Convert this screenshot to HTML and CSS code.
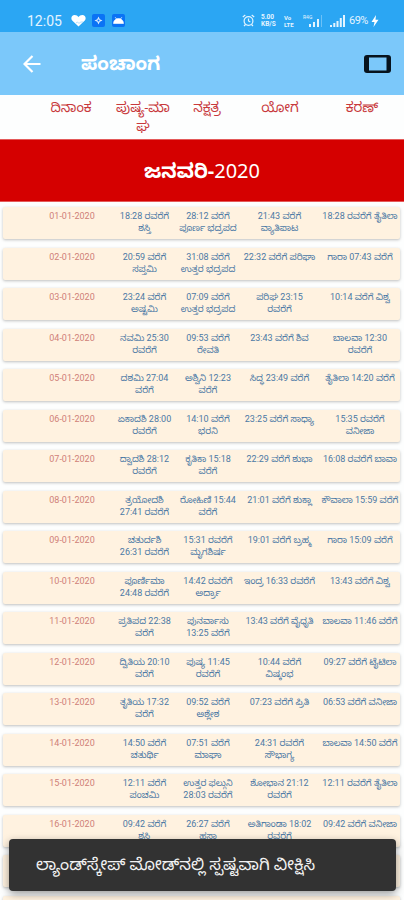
FILE: index.html
```html
<!DOCTYPE html>
<html lang="kn">
<head>
    <meta charset="UTF-8">
    <meta name="viewport" content="width=device-width, initial-scale=1.0">
    <title>ಪಂಚಾಂಗ</title>
    <link rel="stylesheet" href="styles.css">
</head>
<body>
    <div class="status-bar">
        <span class="time">12:05</span>
        <svg class="heart" width="15" height="13" viewBox="0 0 15 13"><path d="M7.5 12.5L1.2 6.6C-.6 4.5.6 1 3.7 1c1.7 0 2.9.8 3.8 2C8.400 1.800 9.600 1 11.300 1c3.100 0 4.300 3.500 2.500 5.600z" fill="#fff"/><path d="M5 9l1.500-1L8 9.500 9.500 8H12" fill="none" stroke="#8fd0fa" stroke-width=".7"/></svg>
        <svg class="app" width="13" height="13" viewBox="0 0 13 13"><rect width="13" height="13" rx="2" fill="#0a73f5"/><path d="M6.500 2.500L7.800 5.200 10.500 6.500 7.800 7.800 6.500 10.500 5.200 7.800 2.500 6.500 5.200 5.200z" fill="#d8ebff"/><circle cx="6.500" cy="6.500" r="1" fill="#0a73f5"/></svg>
        <svg class="app" width="13" height="13" viewBox="0 0 13 13"><rect width="13" height="13" rx="2" fill="#0a73f5"/><path d="M1.500 9.500a5 5 0 0 1 10 0zM3 3l1.500 2M10 3L8.500 5" fill="#fff" stroke="#fff" stroke-width=".6"/></svg>
        <div class="status-right">
            <svg class="alarm" width="13" height="13" viewBox="0 0 13 13" fill="none" stroke="#e4f4ff" stroke-width="1.200"><circle cx="6.500" cy="7" r="4.400"/><path d="M6.500 4.500V7l1.800 1M.8 3L3.300 1M12.200 3L9.700 1M3.500 10.500L2 12M9.500 10.500L11 12"/></svg>
            <div class="tiny speed"><div>5.00</div><div>KB/S</div></div>
            <div class="tiny volte"><div>Vo</div><div>LTE</div></div>
            <span class="net">R4G</span>
            <svg class="signal-one" width="14" height="12" viewBox="0 0 14 12" fill="#e4f4ff"><path d="M0 9h2v3H0zM4 7h2v5H4zM8 4h2v8H8z"/><path d="M12 0h1v12h-1z" opacity=".35"/></svg>
            <svg class="signal-two" width="16" height="12" viewBox="0 0 16 12" fill="#e4f4ff"><path d="M0 10h2v2H0zM3.300 8h2v4h-2zM6.500 6h2v6h-2zM9.800 3h2v9h-2zM13 0h2v12h-2z"/></svg>
            <span class="battery">69%</span>
            <svg width="8" height="12" viewBox="0 0 8 12"><path d="M5 0L.5 7H3.500L2.500 12 7.500 4.800H4.500z" fill="#fff"/></svg>
        </div>
    </div>

    <header>
        <svg class="back" width="18" height="18" viewBox="0 0 18 18" fill="none" stroke="#fff" stroke-width="2.200"><path d="M17.500 9H2M9.500 1L1.500 9l8 8"/></svg>
        <h1>ಪಂಚಾಂಗ</h1>
        <svg class="rotate" width="27" height="18" viewBox="0 0 27 18"><rect width="27" height="18" rx="3" fill="#07131d"/><rect x="5" y="2.500" width="17.500" height="13" fill="#7bc8fa"/></svg>
    </header>

    <div class="columns grid">
        <div>ದಿನಾಂಕ</div>
        <div>ಪುಷ್ಯ-ಮಾ<br>ಘ</div>
        <div>ನಕ್ಷತ್ರ</div>
        <div>ಯೋಗ</div>
        <div>ಕರಣ್</div>
    </div>

    <h2><b>ಜನವರಿ-</b>2020</h2>

    <main>
        <div class="row grid">
            <div class="date">01-01-2020</div>
            <div>18:28 ರವರೆಗೆ<br>ಶಸ್ತಿ</div>
            <div>28:12 ವರೆಗೆ<br>ಪೂರ್ಣ ಭದ್ರಪದ</div>
            <div>21:43 ವರೆಗೆ<br>ವ್ಯಾತಿಪಾಟ</div>
            <div>18:28 ರವರೆಗೆ ತೈತಿಲಾ</div>
        </div>
        <div class="row grid">
            <div class="date">02-01-2020</div>
            <div>20:59 ವರೆಗೆ<br>ಸಪ್ತಮಿ</div>
            <div>31:08 ವರೆಗೆ<br>ಉತ್ತರ ಭದ್ರಪದ</div>
            <div>22:32 ವರೆಗೆ ಪರಿಘಾ</div>
            <div>ಗಾರಾ 07:43 ವರೆಗೆ</div>
        </div>
        <div class="row grid">
            <div class="date">03-01-2020</div>
            <div>23:24 ವರೆಗೆ<br>ಅಷ್ಟಮಿ</div>
            <div>07:09 ವರೆಗೆ<br>ಉತ್ತರ ಭದ್ರಪದ</div>
            <div>ಪರಿಘ 23:15<br>ರವರೆಗೆ</div>
            <div>10:14 ವರೆಗೆ ವಿಶ್ವ</div>
        </div>
        <div class="row grid">
            <div class="date">04-01-2020</div>
            <div>ನವಮಿ 25:30<br>ರವರೆಗೆ</div>
            <div>09:53 ವರೆಗೆ<br>ರೇವತಿ</div>
            <div>23:43 ವರೆಗೆ ಶಿವ</div>
            <div>ಬಾಲವಾ 12:30<br>ರವರೆಗೆ</div>
        </div>
        <div class="row grid">
            <div class="date">05-01-2020</div>
            <div>ದಶಮಿ 27:04<br>ವರೆಗೆ</div>
            <div>ಅಶ್ವಿನಿ 12:23<br>ವರೆಗೆ</div>
            <div>ಸಿದ್ಧ 23:49 ವರೆಗೆ</div>
            <div>ತೈತಿಲಾ 14:20 ವರೆಗೆ</div>
        </div>
        <div class="row grid">
            <div class="date">06-01-2020</div>
            <div>ಏಕಾದಶಿ 28:00<br>ರವರೆಗೆ</div>
            <div>14:10 ವರೆಗೆ<br>ಭರನಿ</div>
            <div>23:25 ವರೆಗೆ ಸಾಧ್ಯಾ</div>
            <div>15:35 ರವರೆಗೆ<br>ವನೀಜಾ</div>
        </div>
        <div class="row grid">
            <div class="date">07-01-2020</div>
            <div>ದ್ವಾದಶಿ 28:12<br>ರವರೆಗೆ</div>
            <div>ಕೃತಿಕಾ 15:18<br>ವರೆಗೆ</div>
            <div>22:29 ವರೆಗೆ ಶುಭಾ</div>
            <div>16:08 ರವರೆಗೆ ಬಾವಾ</div>
        </div>
        <div class="row grid">
            <div class="date">08-01-2020</div>
            <div>ತ್ರಯೋದಶಿ<br>27:41 ರವರೆಗೆ</div>
            <div>ರೋಹಿಣಿ 15:44<br>ವರೆಗೆ</div>
            <div>21:01 ವರೆಗೆ ಶುಕ್ಲಾ</div>
            <div>ಕೌವಾಲಾ 15:59 ವರೆಗೆ</div>
        </div>
        <div class="row grid">
            <div class="date">09-01-2020</div>
            <div>ಚತುರ್ದಶಿ<br>26:31 ರವರೆಗೆ</div>
            <div>15:31 ರವರೆಗೆ<br>ಮೃಗಶಿರ್ಷ</div>
            <div>19:01 ವರೆಗೆ ಬ್ರಹ್ಮ</div>
            <div>ಗಾರಾ 15:09 ವರೆಗೆ</div>
        </div>
        <div class="row grid">
            <div class="date">10-01-2020</div>
            <div>ಪೂರ್ಣಿಮಾ<br>24:48 ರವರೆಗೆ</div>
            <div>14:42 ರವರೆಗೆ<br>ಅರ್ದ್ರಾ</div>
            <div>ಇಂದ್ರ 16:33 ರವರೆಗೆ</div>
            <div>13:43 ವರೆಗೆ ವಿಶ್ವ</div>
        </div>
        <div class="row grid">
            <div class="date">11-01-2020</div>
            <div>ಪ್ರತಿಪದ 22:38<br>ವರೆಗೆ</div>
            <div>ಪುನರ್ವಾಸು<br>13:25 ವರೆಗೆ</div>
            <div>13:43 ವರೆಗೆ ವೈಧೃತಿ</div>
            <div>ಬಾಲವಾ 11:46 ವರೆಗೆ</div>
        </div>
        <div class="row grid">
            <div class="date">12-01-2020</div>
            <div>ದ್ವಿತಿಯ 20:10<br>ವರೆಗೆ</div>
            <div>ಪುಷ್ಯ 11:45<br>ರವರೆಗೆ</div>
            <div>10:44 ವರೆಗೆ<br>ವಿಷ್ಕಂಭ</div>
            <div>09:27 ವರೆಗೆ ಟೈಟಿಲಾ</div>
        </div>
        <div class="row grid">
            <div class="date">13-01-2020</div>
            <div>ತೃತಿಯ 17:32<br>ವರೆಗೆ</div>
            <div>09:52 ವರೆಗೆ<br>ಅಶ್ಲೇಶ</div>
            <div>07:23 ವರೆಗೆ ಪ್ರಿತಿ</div>
            <div>06:53 ವರೆಗೆ ವನೀಜಾ</div>
        </div>
        <div class="row grid">
            <div class="date">14-01-2020</div>
            <div>14:50 ವರೆಗೆ<br>ಚತುರ್ಥಿ</div>
            <div>07:51 ವರೆಗೆ<br>ಮಾಘಾ</div>
            <div>24:31 ರವರೆಗೆ<br>ಸೌಭಾಗ್ಯ</div>
            <div>ಬಾಲವಾ 14:50 ವರೆಗೆ</div>
        </div>
        <div class="row grid">
            <div class="date">15-01-2020</div>
            <div>12:11 ವರೆಗೆ<br>ಪಂಚಮಿ</div>
            <div>ಉತ್ತರ ಫಲ್ಗುನಿ<br>28:03 ರವರೆಗೆ</div>
            <div>ಶೋಭಾನ 21:12<br>ರವರೆಗೆ</div>
            <div>12:11 ರವರೆಗೆ ತೈತಿಲಾ</div>
        </div>
        <div class="row grid">
            <div class="date">16-01-2020</div>
            <div>09:42 ವರೆಗೆ<br>ಶಸ್ತಿ</div>
            <div>26:27 ವರೆಗೆ<br>ಹಸಾ</div>
            <div>ಅತಿಗಾಂಡಾ 18:02<br>ರವರೆಗೆ</div>
            <div>09:42 ವರೆಗೆ ವನೀಜಾ</div>
        </div>
        <div class="row"></div>
        <div class="row"></div>
    </main>

    <div class="snackbar">ಲ್ಯಾಂಡ್‌ಸ್ಕೇಪ್ ಮೋಡ್‌ನಲ್ಲಿ ಸ್ಪಷ್ಟವಾಗಿ ವೀಕ್ಷಿಸಿ</div>
</body>
</html>
```
FILE: styles.css
```css
* {
    box-sizing: border-box;
}

body {
    margin: 0;
    height: 900px;
    overflow: hidden;
    background: #fdfefe;
    font-family: Roboto, "Noto Sans Kannada", "Noto Sans", sans-serif;
}

.status-bar {
    height: 32px;
    padding: 9px 25px 0 27px;
    background: #2ba6f3;
    color: #e4f4ff;
    display: flex;
    align-items: center;
}

.time {
    width: 44px;
    font-size: 14px;
    line-height: 22px;
}

.heart {
    margin-right: 6px;
}

.app {
    margin-right: 7px;
}

.status-right {
    margin-left: auto;
    display: flex;
    align-items: center;
}

.alarm {
    margin-right: 6px;
}

.tiny {
    font-size: 6px;
    line-height: 7px;
    font-weight: bold;
}

.speed {
    width: 23px;
    font-size: 6.5px;
}

.volte {
    width: 19px;
}

.net {
    width: 6px;
    margin-top: -7px;
    font-size: 5px;
    line-height: 6px;
}

.signal-two {
    margin: 0 3px 0 7px;
}

.battery {
    width: 22px;
    font-size: 11px;
    letter-spacing: -0.5px;
}

header {
    height: 63px;
    padding: 0 13px 0 23px;
    background: #7bc8fa;
    display: flex;
    align-items: center;
}

h1 {
    margin: 0 0 0 40px;
    font-size: 19px;
    line-height: 26px;
    color: #fff;
}

.rotate {
    margin-left: auto;
}

.grid {
    display: grid;
    grid-template-columns: 80px 65px 62px 81px 80px;
    text-align: center;
    white-space: nowrap;
}

.columns {
    grid-template-columns: 78px 66px 62px 84px 80px;
    height: 44px;
    padding: 3px 0 0 32px;
    font-size: 13.5px;
    line-height: 19px;
    color: #c8393c;
}

.columns > div,
.row > div {
    display: flow-root;
    justify-self: center;
}

h2 {
    margin: 0;
    height: 63px;
    background: #d50000;
    border-top: 1px solid #e45a5a;
    border-bottom: 1px solid #e45a5a;
    color: #fff;
    font-size: 20px;
    font-weight: normal;
    font-family: "Noto Sans", "Noto Sans Kannada", sans-serif;
    line-height: 62px;
    text-align: center;
}

h2 b {
    font-size: 20px;
}

main {
    padding: 5px 4px 0 3px;
}

.row {
    height: 32px;
    margin-bottom: 8.5px;
    padding: 3px 0 0 29px;
    background: #fff2e0;
    border-radius: 2px;
    box-shadow: 0 1px 3px rgba(0, 0, 0, 0.25);
    font-size: 9px;
    line-height: 12px;
    color: #4c79a5;
}

.date {
    color: #cf8078;
}

/* floats over the list */
.snackbar {
    position: absolute;
    left: 9px;
    right: 8px;
    bottom: 9px;
    height: 52px;
    padding-left: 27px;
    background: #323232;
    border-radius: 4px;
    box-shadow: 0 3px 9px rgba(0, 0, 0, 0.4);
    color: #f1f1f1;
    font-size: 16.5px;
    line-height: 52px;
    white-space: nowrap;
}
```
